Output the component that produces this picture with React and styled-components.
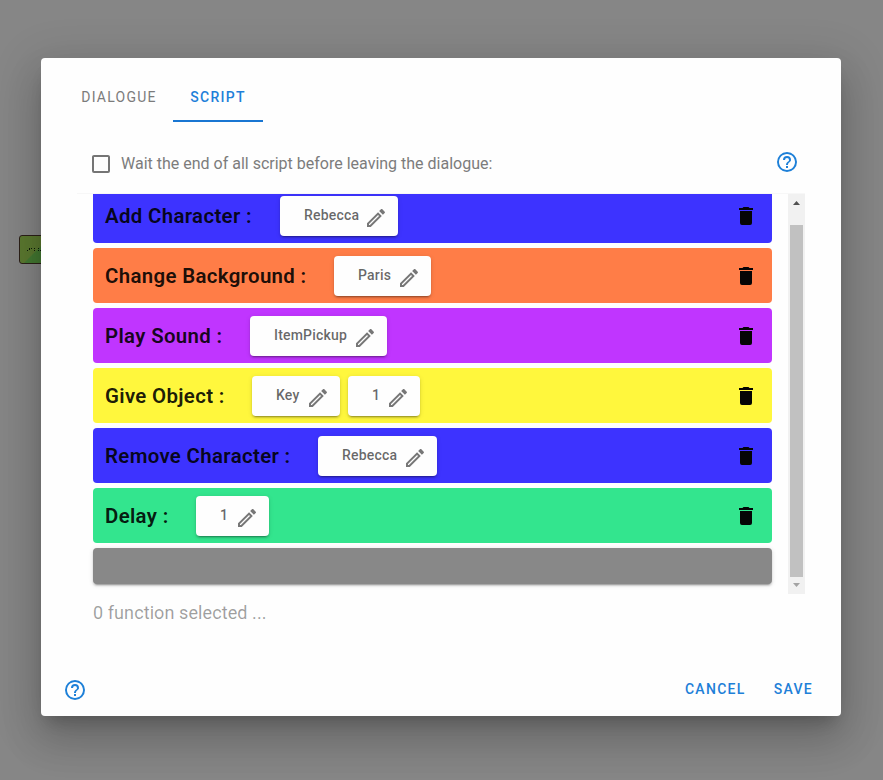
import React from "react";
import styled, { createGlobalStyle } from "styled-components";

const GlobalStyle = createGlobalStyle`
  * { box-sizing: border-box; }
  body { margin: 0; font-family: Roboto, sans-serif; overflow: hidden; }
  button { font-family: inherit; border: 0; background: none; padding: 0; }
`;

const paths = {
  pencil:
    "M14.06,9L15,9.94L5.92,19H5V18.08L14.06,9M17.66,3C17.41,3 17.15,3.1 16.96,3.29L15.13,5.12L18.88,8.87L20.71,7.04C21.1,6.65 21.1,6 20.71,5.63L18.37,3.29C18.17,3.09 17.92,3 17.66,3M14.06,6.19L3,17.25V21H6.75L17.81,9.94L14.06,6.19Z",
  trash:
    "M19,4H15.5L14.5,3H9.5L8.5,4H5V6H19M6,19A2,2 0 0,0 8,21H16A2,2 0 0,0 18,19V7H6V19Z",
  help:
    "M11,18H13V16H11V18M12,2A10,10 0 0,0 2,12A10,10 0 0,0 12,22A10,10 0 0,0 22,12A10,10 0 0,0 12,2M12,20C7.59,20 4,16.41 4,12C4,7.59 7.59,4 12,4C16.41,4 20,7.59 20,12C20,16.41 16.41,20 12,20M12,6A4,4 0 0,0 8,10H10A2,2 0 0,1 12,8A2,2 0 0,1 14,10C14,12 11,11.75 11,15H13C13,12.25 16,12 16,10A4,4 0 0,0 12,6Z",
  checkbox:
    "M19,3H5C3.89,3 3,3.89 3,5V19A2,2 0 0,0 5,21H19A2,2 0 0,0 21,19V5C21,3.89 20.1,3 19,3M19,5V19H5V5H19Z",
};

const Svg = styled.svg`
  display: block;
  flex: none;
  width: 24px;
  height: 24px;
  fill: ${(p) => p.$color};
`;

const Icon = ({ name, color, className }) => (
  <Svg className={className} $color={color} viewBox="0 0 24 24">
    <path d={paths[name]} />
  </Svg>
);

const Backdrop = styled.main`
  position: relative;
  width: 883px;
  height: 780px;
  padding: 58px 42px 0 41px;
  background: #868686;
  overflow: hidden;
`;

const GraphNode = styled.div`
  position: absolute;
  left: 19px;
  top: 235px;
  width: 60px;
  height: 29px;
  padding: 12px 0 0 7px;
  border: 1px solid #2c2018;
  border-radius: 3px;
  background: linear-gradient(135deg, #5c7a30 0 36%, #447a32 37%);
`;

const NodeMark = styled.svg`
  display: block;
  width: 15px;
  height: 4px;
  fill: #0c1a08;
`;

const Dialog = styled.section`
  position: relative;
  display: flex;
  flex-direction: column;
  width: 800px;
  height: 658px;
  border-radius: 4px;
  background: #fefefe;
  box-shadow: 0 11px 15px -7px rgba(0, 0, 0, 0.2),
    0 24px 38px 3px rgba(0, 0, 0, 0.14), 0 9px 46px 8px rgba(0, 0, 0, 0.12);
`;

const Tabs = styled.nav`
  display: flex;
  height: 64px;
  padding: 16px 0 0 24px;
`;

const Tab = styled.button`
  width: ${(p) => p.$width}px;
  height: 48px;
  border-bottom: 2px solid ${(p) => (p.$active ? "#1976d2" : "transparent")};
  color: ${(p) => (p.$active ? "#1f80d9" : "#7b7b7b")};
  font-size: 14px;
  font-weight: ${(p) => (p.$active ? 500 : 450)};
  letter-spacing: 1.25px;
`;

const WaitRow = styled.div`
  display: flex;
  align-items: center;
  height: 72px;
  padding: 12px 42px 0 48px;
`;

const WaitLabel = styled.label`
  flex: 1;
  margin-left: 8px;
  color: #7c7c7c;
  font-size: 16px;
  line-height: 20px;
`;

const WaitHelp = styled(Icon)`
  margin-top: -4px;
`;

const ScrollArea = styled.div`
  display: flex;
  height: 401px;
  margin: -1px 36px 0 36px;
  border-top: 1px solid #f7f7f7;
  overflow: hidden;
`;

const List = styled.div`
  display: flex;
  flex: 1;
  flex-direction: column;
  gap: 5px;
  margin-top: -6px;
  padding: 0 16px 0 16px;
`;

const Row = styled.div`
  display: flex;
  flex: none;
  align-items: center;
  height: 55px;
  padding: 0 14px 0 12px;
  border-radius: 4px;
  background: ${(p) => p.$color};
`;

const RowTitle = styled.h2`
  flex: none;
  width: ${(p) => p.$width}px;
  margin: 0;
  color: rgba(0, 0, 0, 0.9);
  font-size: 20.4px;
  font-weight: 600;
  line-height: 32px;
  letter-spacing: 0.35px;
  white-space: nowrap;
`;

const ValueButton = styled.button`
  display: flex;
  flex: none;
  align-items: center;
  justify-content: space-between;
  width: ${(p) => p.$width}px;
  height: 40px;
  margin-right: 8px;
  padding: 0 10px 0 24px;
  border-radius: 4px;
  background: #fefefe;
  box-shadow: 0 3px 1px -2px rgba(0, 0, 0, 0.2),
    0 2px 2px rgba(0, 0, 0, 0.14), 0 1px 5px rgba(0, 0, 0, 0.12);
  color: rgba(0, 0, 0, 0.6);
  font-size: 14px;
  font-weight: 500;
  line-height: 20px;
  letter-spacing: 0.2px;
`;

const ValueText = styled.span`
  margin-top: -2px;
`;

const EditIcon = styled(Icon)`
  margin-top: 4px;
`;

const DeleteIcon = styled(Icon)`
  margin-left: auto;
`;

const EmptySlot = styled.div`
  flex: none;
  height: 36px;
  border-radius: 4px;
  background: #888;
  box-shadow: 0 3px 1px -2px rgba(0, 0, 0, 0.2),
    0 2px 2px rgba(0, 0, 0, 0.14), 0 1px 5px rgba(0, 0, 0, 0.12);
`;

const Scrollbar = styled.div`
  display: flex;
  flex-direction: column;
  align-items: center;
  width: 17px;
  background: #f1f1f1;
`;

const Arrow = styled.svg`
  display: block;
  width: 17px;
  height: 17px;
  fill: ${(p) => p.$color};
`;

const Thumb = styled.div`
  width: 13px;
  height: 352px;
  margin-top: 14px;
  background: #c1c1c1;
`;

const Status = styled.p`
  margin: 7px 0 0 52px;
  color: rgba(0, 0, 0, 0.38);
  font-size: 18px;
  line-height: 24px;
  letter-spacing: 0.09px;
`;

const Footer = styled.footer`
  display: flex;
  align-items: center;
  height: 52px;
  margin-top: auto;
  padding: 0 27px 0 22px;
`;

const FooterActions = styled.div`
  display: flex;
  gap: 28px;
  margin: -2px 1px 0 auto;
`;

const TextButton = styled.button`
  color: #1e80d8;
  font-size: 14px;
  font-weight: 500;
  line-height: 20px;
  letter-spacing: 1.3px;
`;

const commands = [
  { title: "Add Character :", color: "#3d33ff", offset: 175, values: [["Rebecca", 118]] },
  { title: "Change Background :", color: "#ff7d47", offset: 229, values: [["Paris", 97]] },
  { title: "Play Sound :", color: "#c035ff", offset: 145, values: [["ItemPickup", 137]] },
  { title: "Give Object :", color: "#fff73d", offset: 147, values: [["Key", 88], ["1", 72]] },
  { title: "Remove Character :", color: "#3d33ff", offset: 213, values: [["Rebecca", 119]] },
  { title: "Delay :", color: "#33e58e", offset: 91, values: [["1", 73]] },
];

export default function App() {
  return (
    <Backdrop>
      <GlobalStyle />
      <GraphNode>
        <NodeMark viewBox="0 0 15 4">
          <path d="M0 2h1v1h-1zM2 0h1v2h-1zM4 0h1v1h-1zM7 0h1v1h-1zM7 2h1v1h-1zM11 0h1v1h-1zM11 2h1v1h-1zM13 2h1v1h-1z" />
        </NodeMark>
      </GraphNode>
      <Dialog>
        <Tabs>
          <Tab $width={108}>DIALOGUE</Tab>
          <Tab $width={90} $active>SCRIPT</Tab>
        </Tabs>
        <WaitRow>
          <Icon name="checkbox" color="#757575" />
          <WaitLabel>Wait the end of all script before leaving the dialogue:</WaitLabel>
          <WaitHelp name="help" color="#1e80d8" />
        </WaitRow>
        <ScrollArea>
          <List>
            {commands.map((c) => (
              <Row key={c.title} $color={c.color}>
                <RowTitle $width={c.offset}>{c.title}</RowTitle>
                {c.values.map(([text, width]) => (
                  <ValueButton key={text} $width={width}>
                    <ValueText>{text}</ValueText>
                    <EditIcon name="pencil" color="#777" />
                  </ValueButton>
                ))}
                <DeleteIcon name="trash" color="#050505" />
              </Row>
            ))}
            <EmptySlot />
          </List>
          <Scrollbar>
            <Arrow $color="#505050" viewBox="0 0 17 17"><path d="M5 11L8.5 7L12 11Z" /></Arrow>
            <Thumb />
            <Arrow $color="#a3a3a3" viewBox="0 0 17 17"><path d="M5 6L8.5 10L12 6Z" /></Arrow>
          </Scrollbar>
        </ScrollArea>
        <Status>0 function selected ...</Status>
        <Footer>
          <Icon name="help" color="#1e80d8" />
          <FooterActions>
            <TextButton>CANCEL</TextButton>
            <TextButton>SAVE</TextButton>
          </FooterActions>
        </Footer>
      </Dialog>
    </Backdrop>
  );
}
